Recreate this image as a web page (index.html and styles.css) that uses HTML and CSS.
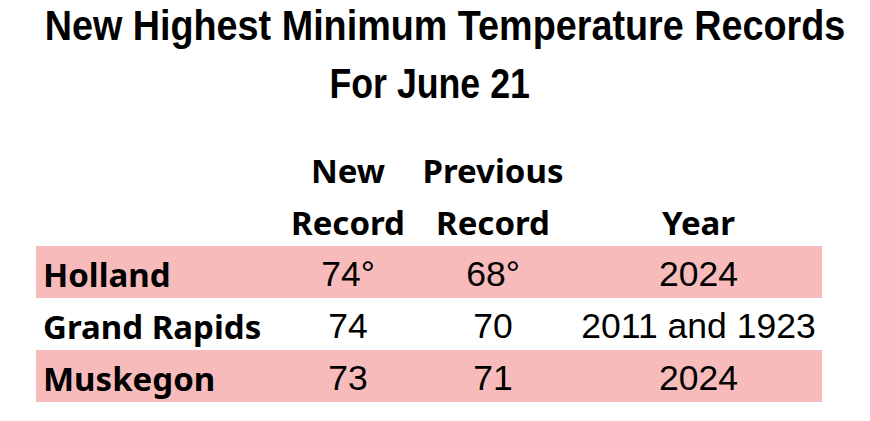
FILE: index.html
```html
<!DOCTYPE html>
<html>
<head>
<meta charset="utf-8">
<link rel="stylesheet" href="styles.css">
</head>
<body>
<header class="title">
  <div class="line"><span class="narrow">New Highest Minimum Temperature Records</span></div>
  <div class="line second"><span class="narrow">For June 21</span></div>
</header>
<table class="records">
  <colgroup>
    <col class="c-name"><col class="c-new"><col class="c-prev"><col class="c-year">
  </colgroup>
  <thead>
    <tr><th></th><th>New</th><th>Previous</th><th></th></tr>
    <tr><th></th><th>Record</th><th>Record</th><th>Year</th></tr>
  </thead>
  <tbody>
    <tr class="pink"><th class="name">Holland</th><td>74°</td><td>68°</td><td>2024</td></tr>
    <tr><th class="name">Grand Rapids</th><td>74</td><td>70</td><td>2011 and 1923</td></tr>
    <tr class="pink"><th class="name">Muskegon</th><td>73</td><td>71</td><td>2024</td></tr>
  </tbody>
</table>
</body>
</html>
```
FILE: styles.css
```css
html, body {
  margin: 0;
  padding: 0;
  background: #ffffff;
  color: #000000;
  overflow: hidden;
}
.title {
  margin-top: -4px;
  font-family: "Liberation Sans", Arial, sans-serif;
  font-weight: 700;
  font-size: 43px;
  line-height: 58px;
  white-space: nowrap;
}
.line {
  height: 58px;
  display: flex;
  justify-content: center;
  padding-left: 20px;
}
.line.second {
  padding-left: 0;
  padding-right: 10px;
}
.narrow {
  display: block;
  flex: none;
  transform: scaleX(0.878);
  transform-origin: center;
}
.second .narrow {
  transform: scaleX(0.83);
}
.records {
  margin-top: 30px;
  margin-left: 36px;
  border-collapse: collapse;
  table-layout: fixed;
  width: 786px;
}
.c-name { width: 249px; }
.c-new { width: 126px; }
.c-prev { width: 164px; }
.c-year { width: 247px; }
.records th,
.records td {
  padding: 5px 0 0 0;
  height: 47px;
  line-height: 47px;
  text-align: center;
  white-space: nowrap;
}
.records th {
  font-family: "Noto Sans", sans-serif;
  font-weight: 700;
  font-size: 33px;
}
.records td {
  font-family: "Liberation Sans", Arial, sans-serif;
  font-size: 35.5px;
}
.records th.name {
  text-align: left;
  padding-left: 7px;
}
.records tr.pink {
  background: #f8bbbb;
}
```
